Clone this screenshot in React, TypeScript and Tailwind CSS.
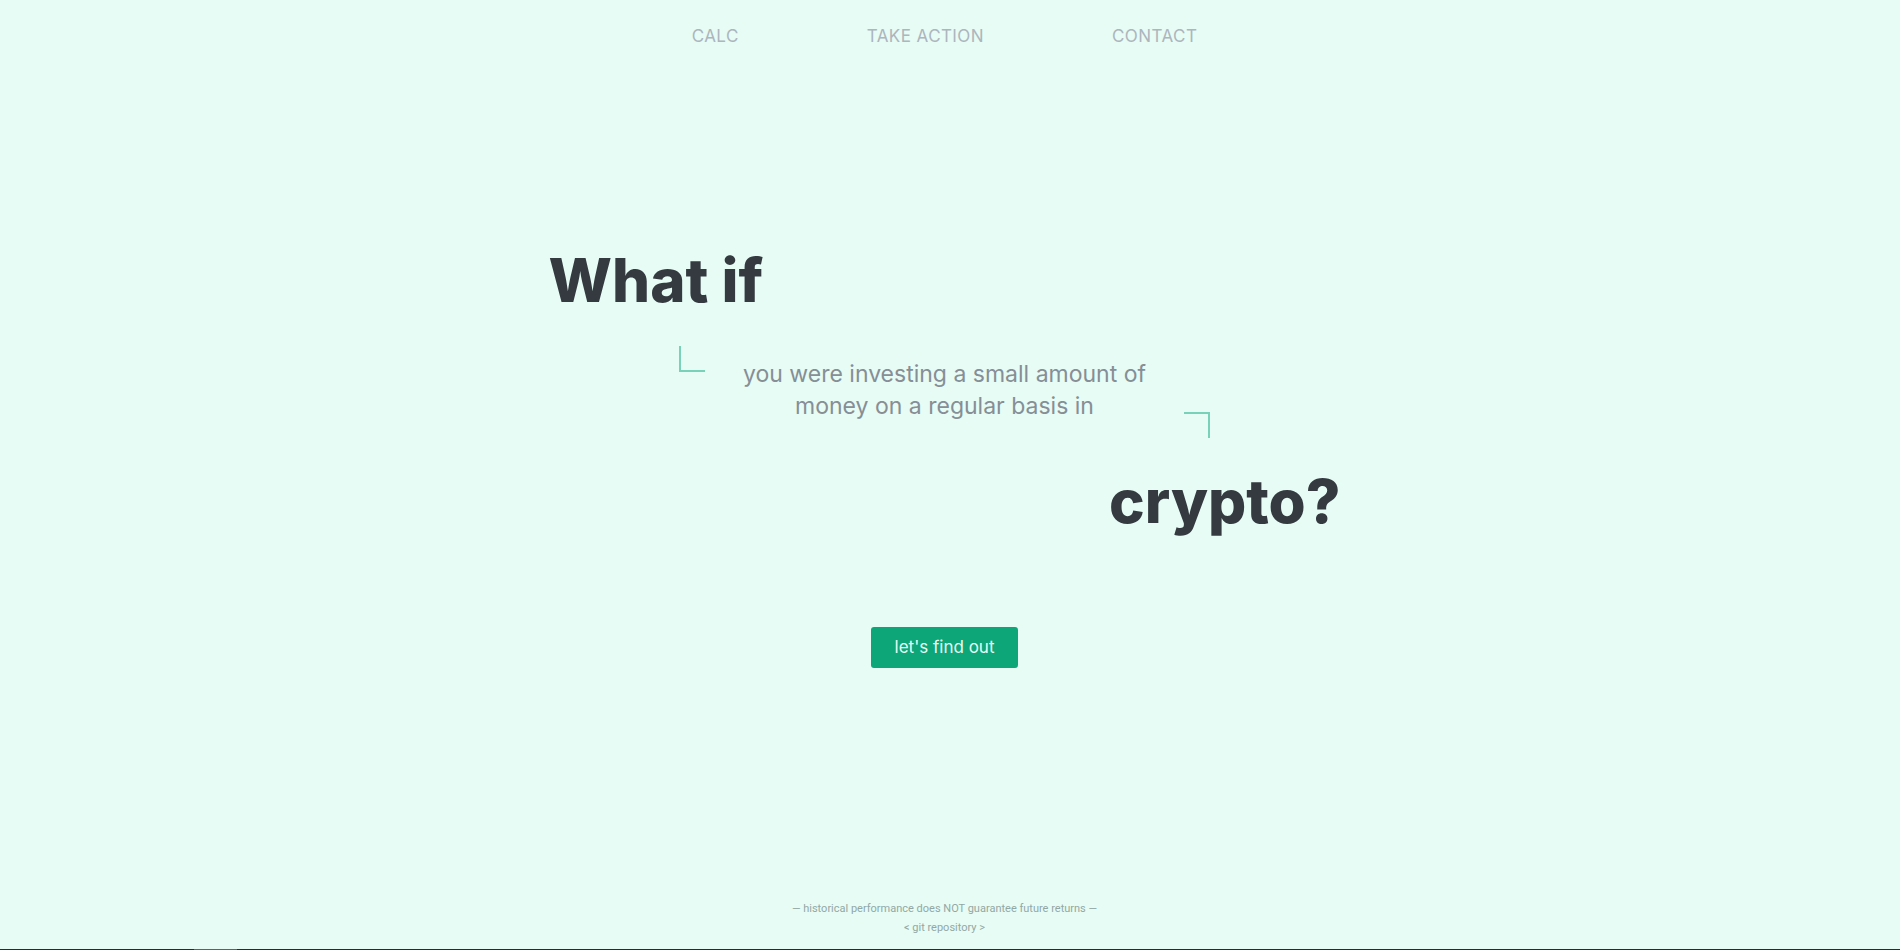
const links = [
  { label: 'CALC', href: '#calc' },
  { label: 'TAKE ACTION', href: '#action' },
  { label: 'CONTACT', href: '#contact' },
];

export default function App() {
  return (
    <div className="flex min-h-screen flex-col bg-[#e6fcf5] font-[Inter,Roboto,sans-serif]">
      <div className="flex flex-1 flex-col items-center pr-[11px]">
        <header className="pt-6">
          <nav className="flex gap-32 text-[17px] leading-6 tracking-wide text-[#adb5bd]">
            {links.map((link) => (
              <a key={link.href} href={link.href}>
                {link.label}
              </a>
            ))}
          </nav>
        </header>

        <main className="flex w-full max-w-[792px] flex-1 flex-col items-center pt-[197px]">
          <h1 className="flex w-full flex-col text-[60px] leading-[70px] font-extrabold text-[#343a40]">
            <span className="self-start">What if</span>
            <span className="mt-[31px] mb-7 flex h-[92px] justify-center gap-[30px] self-center text-[23px] leading-8 font-normal text-[#868e96]">
              <span className="size-[26px] self-start border-b-2 border-l-2 border-[#79d1b7]" />
              <span className="w-[419px] pt-3 text-center">
                you were investing a small amount of money on a regular basis in
              </span>
              <span className="size-[26px] self-end border-t-2 border-r-2 border-[#79d1b7]" />
            </span>
            <span className="self-end">crypto?</span>
          </h1>
          <button
            type="button"
            className="mt-[91px] h-[41px] rounded-[3px] bg-[#0ca678] px-6 text-[17px] text-[#e6fcf5]"
          >
            let's find out
          </button>
        </main>

        <footer className="flex flex-col items-center pb-3 font-[Roboto,sans-serif] text-[11px] leading-[19px] text-[#93a8a4]">
          <p>— historical performance does NOT guarantee future returns —</p>
          <a href="#repository">&lt; git repository &gt;</a>
        </footer>
      </div>
      <div className="h-px bg-[#1f2f38] pl-[194px]">
        <div className="h-px w-[43px] bg-[#52676a]" />
      </div>
    </div>
  );
}
